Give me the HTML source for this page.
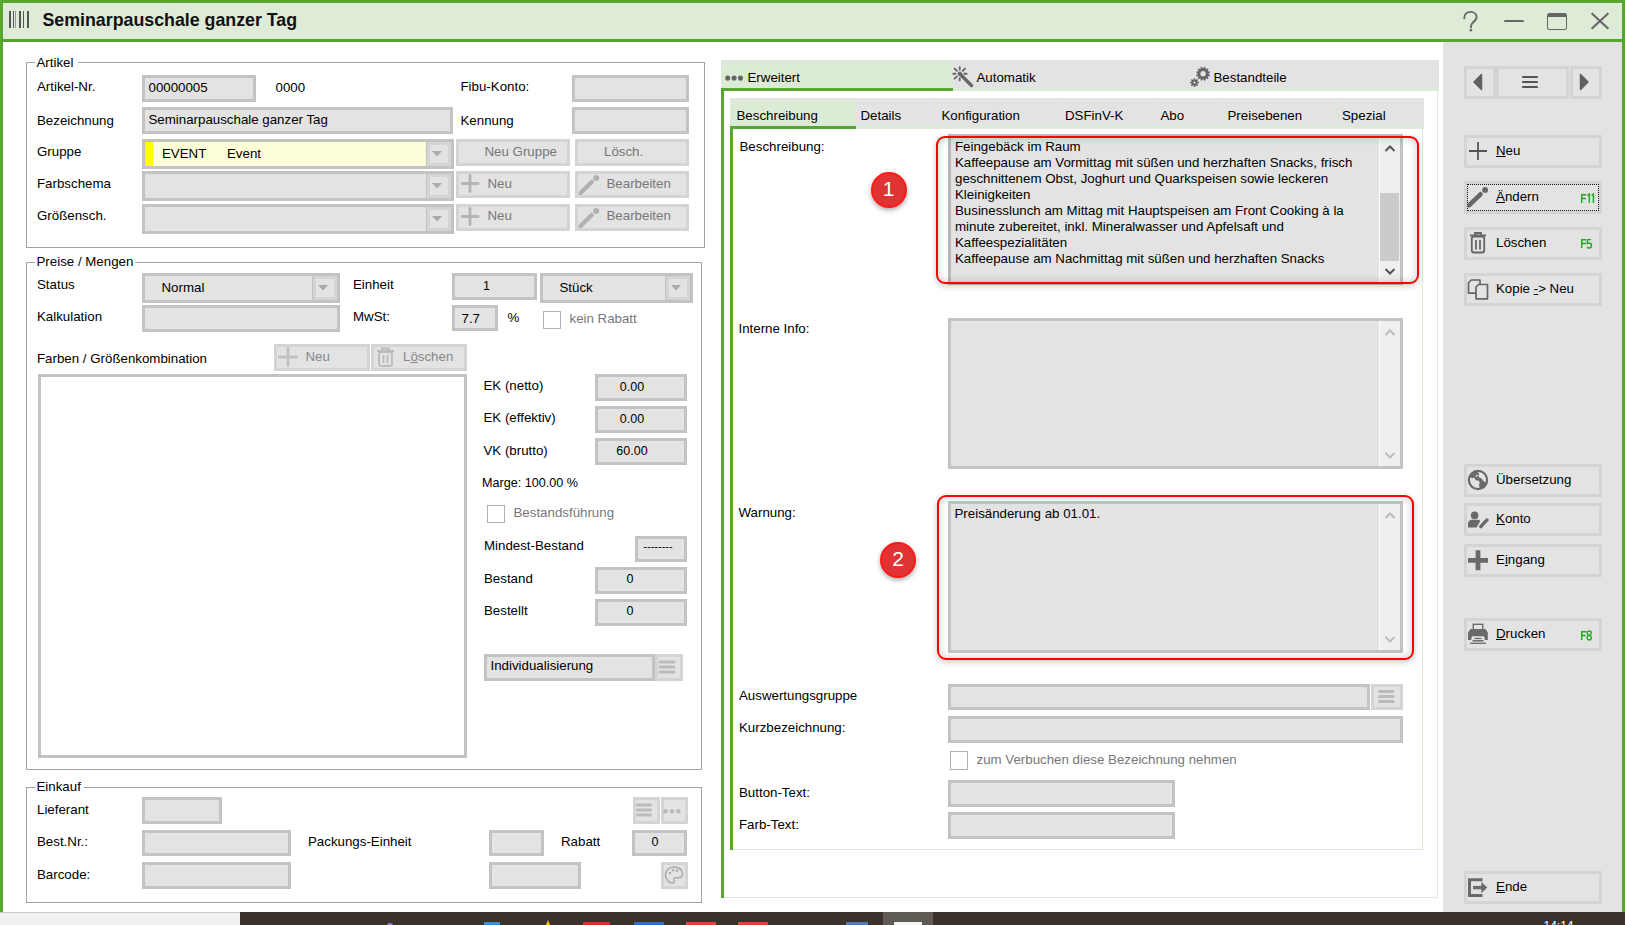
<!DOCTYPE html><html><head><meta charset="utf-8"><style>
html,body{margin:0;padding:0;width:1625px;height:925px;overflow:hidden;background:#fff}
.a{position:absolute;box-sizing:border-box}
.t{font-family:"Liberation Sans",sans-serif;white-space:nowrap;line-height:15px}
svg{overflow:visible}
</style></head><body>
<div class="a" style="left:0px;top:0px;width:1625px;height:912px;background:#fff;"></div>
<div class="a" style="left:0px;top:0px;width:1625px;height:3px;background:#58a531;"></div>
<div class="a" style="left:0px;top:0px;width:3px;height:912px;background:#58a531;"></div>
<div class="a" style="left:1622px;top:0px;width:3px;height:912px;background:#58a531;"></div>
<div class="a" style="left:3px;top:3px;width:1619px;height:36px;background:#deebd6;"></div>
<div class="a" style="left:3px;top:39px;width:1619px;height:3px;background:#58a531;"></div>
<div class="a" style="left:9px;top:11px;width:2px;height:17px;background:#555;"></div>
<div class="a" style="left:13px;top:11px;width:1px;height:17px;background:#555;"></div>
<div class="a" style="left:15px;top:11px;width:1px;height:17px;background:#999;"></div>
<div class="a" style="left:19px;top:11px;width:2px;height:17px;background:#555;"></div>
<div class="a" style="left:23px;top:11px;width:1px;height:17px;background:#555;"></div>
<div class="a" style="left:27px;top:11px;width:2px;height:17px;background:#555;"></div>
<div class="a t " style="left:42.5px;top:12.78px;font-size:17.8px;color:#111;font-weight:bold;">Seminarpauschale ganzer Tag</div>
<svg class="a" style="left:1460px;top:8px" width="24" height="26" viewBox="0 0 24 26"><path d="M4.3 10.2 C4.1 6.3 6.6 3.9 10.5 3.9 C14.4 3.9 16.6 6.3 16.6 9.1 C16.6 11.9 14.6 13.3 12.7 14.8 C11.2 16 10.9 17 10.9 19.4" stroke="#666" stroke-width="1.9" fill="none" stroke-linecap="round"/><circle cx="10.9" cy="22.2" r="1.3" fill="#666"/></svg>
<div class="a" style="left:1504px;top:20px;width:20px;height:2px;background:#666;border-radius:1px;"></div>
<div class="a" style="left:1547px;top:12.5px;width:20px;height:17.0px;border:1.6px solid #666;border-top-width:4.2px;border-radius:2.5px;"></div>
<svg class="a" style="left:1590px;top:12px" width="20" height="20" viewBox="0 0 20 20"><path d="M2.2 1.7 L17.8 16.3 M17.8 1.7 L2.2 16.3" stroke="#666" stroke-width="2.1" stroke-linecap="round"/></svg>
<div class="a" style="left:26px;top:62px;width:679px;height:186px;border:1px solid #a3a3a3;"></div>
<div class="a" style="left:35px;top:60px;width:43px;height:5px;background:#fff;"></div>
<div class="a t " style="left:36.5px;top:54.61px;font-size:13.3px;color:#000;font-weight:normal;">Artikel</div>
<div class="a t " style="left:37.0px;top:79.11px;font-size:13.3px;color:#000;font-weight:normal;">Artikel-Nr.</div>
<div class="a" style="left:142px;top:75px;width:114px;height:27px;background:#e3e3e3;border:3px solid #c3c3c3;"></div>
<div class="a t " style="left:148.5px;top:80.11px;font-size:13.3px;color:#000;font-weight:normal;">00000005</div>
<div class="a t " style="left:275.5px;top:79.61px;font-size:13.3px;color:#000;font-weight:normal;">0000</div>
<div class="a t " style="left:460.5px;top:79.11px;font-size:13.3px;color:#000;font-weight:normal;">Fibu-Konto:</div>
<div class="a" style="left:572px;top:75px;width:117px;height:27px;background:#e3e3e3;border:3px solid #c3c3c3;"></div>
<div class="a t " style="left:37.0px;top:113.11px;font-size:13.3px;color:#000;font-weight:normal;">Bezeichnung</div>
<div class="a" style="left:142px;top:107px;width:311px;height:27px;background:#e3e3e3;border:3px solid #c3c3c3;"></div>
<div class="a t " style="left:148.5px;top:112.11px;font-size:13.3px;color:#000;font-weight:normal;">Seminarpauschale ganzer Tag</div>
<div class="a t " style="left:460.5px;top:112.61px;font-size:13.3px;color:#000;font-weight:normal;">Kennung</div>
<div class="a" style="left:572px;top:107px;width:117px;height:27px;background:#e3e3e3;border:3px solid #c3c3c3;"></div>
<div class="a t " style="left:37.0px;top:144.11px;font-size:13.3px;color:#000;font-weight:normal;">Gruppe</div>
<div class="a" style="left:142px;top:139px;width:312px;height:30px;background:#fdfdd8;border:3px solid #c3c3c3;"></div>
<div class="a" style="left:426px;top:142px;width:1px;height:24px;background:#c3c3c3;"></div>
<div class="a" style="left:427px;top:142px;width:24px;height:24px;background:#e3e3e3;border:3px solid #d4d4d4;"></div>
<svg class="a" style="left:427px;top:142px" width="25" height="24"><polygon points="5,9.0 15,9.0 10,14.5" fill="#aaa"/></svg>
<div class="a" style="left:145px;top:142px;width:8px;height:24px;background:#ffff00;"></div>
<div class="a t " style="left:162.0px;top:145.61px;font-size:13.3px;color:#000;font-weight:normal;">EVENT</div>
<div class="a t " style="left:227.0px;top:145.61px;font-size:13.3px;color:#000;font-weight:normal;">Event</div>
<div class="a" style="left:456px;top:139px;width:114px;height:27px;background:#e3e3e3;border:3px solid #d4d4d4;"></div>
<div class="a t " style="left:484.5px;top:144.11px;font-size:13.3px;color:#777;font-weight:normal;">Neu Gruppe</div>
<div class="a" style="left:575px;top:139px;width:114px;height:27px;background:#e3e3e3;border:3px solid #d4d4d4;"></div>
<div class="a t " style="left:604.0px;top:144.11px;font-size:13.3px;color:#777;font-weight:normal;">Lösch.</div>
<div class="a t " style="left:37.0px;top:175.61px;font-size:13.3px;color:#000;font-weight:normal;">Farbschema</div>
<div class="a" style="left:142px;top:171px;width:312px;height:30px;background:#e3e3e3;border:3px solid #c3c3c3;"></div>
<div class="a" style="left:426px;top:174px;width:1px;height:24px;background:#c3c3c3;"></div>
<div class="a" style="left:427px;top:174px;width:24px;height:24px;background:#e3e3e3;border:3px solid #d4d4d4;"></div>
<svg class="a" style="left:427px;top:174px" width="25" height="24"><polygon points="5,9.0 15,9.0 10,14.5" fill="#aaa"/></svg>
<div class="a" style="left:456px;top:171px;width:114px;height:27px;background:#e3e3e3;border:3px solid #d4d4d4;"></div>
<div class="a t " style="left:487.5px;top:175.61px;font-size:13.3px;color:#777;font-weight:normal;">Neu</div>
<div class="a" style="left:575px;top:171px;width:114px;height:27px;background:#e3e3e3;border:3px solid #d4d4d4;"></div>
<div class="a t " style="left:606.5px;top:175.61px;font-size:13.3px;color:#777;font-weight:normal;">Bearbeiten</div>
<div class="a t " style="left:37.0px;top:207.61px;font-size:13.3px;color:#000;font-weight:normal;">Größensch.</div>
<div class="a" style="left:142px;top:204px;width:312px;height:30px;background:#e3e3e3;border:3px solid #c3c3c3;"></div>
<div class="a" style="left:426px;top:207px;width:1px;height:24px;background:#c3c3c3;"></div>
<div class="a" style="left:427px;top:207px;width:24px;height:24px;background:#e3e3e3;border:3px solid #d4d4d4;"></div>
<svg class="a" style="left:427px;top:207px" width="25" height="24"><polygon points="5,9.0 15,9.0 10,14.5" fill="#aaa"/></svg>
<div class="a" style="left:456px;top:204px;width:114px;height:27px;background:#e3e3e3;border:3px solid #d4d4d4;"></div>
<div class="a t " style="left:487.5px;top:208.11px;font-size:13.3px;color:#777;font-weight:normal;">Neu</div>
<div class="a" style="left:575px;top:204px;width:114px;height:27px;background:#e3e3e3;border:3px solid #d4d4d4;"></div>
<div class="a t " style="left:606.5px;top:208.11px;font-size:13.3px;color:#777;font-weight:normal;">Bearbeiten</div>
<svg class="a" style="left:461px;top:174px" width="19" height="19" viewBox="0 0 19 19"><path d="M9 1.5 V17.5 M1.2 9.5 H17.2" stroke="#b5b5b5" stroke-width="2.8" stroke-linecap="round"/></svg>
<svg class="a" style="left:578px;top:174px" width="22" height="22" viewBox="0 0 22 22"><path d="M2.5 19 L13.8 8" stroke="#b0b0b0" stroke-width="4.4" stroke-linecap="round"/><circle cx="18.2" cy="3.9" r="3" fill="#b0b0b0"/></svg>
<svg class="a" style="left:461px;top:207px" width="19" height="19" viewBox="0 0 19 19"><path d="M9 1.5 V17.5 M1.2 9.5 H17.2" stroke="#b5b5b5" stroke-width="2.8" stroke-linecap="round"/></svg>
<svg class="a" style="left:578px;top:207px" width="22" height="22" viewBox="0 0 22 22"><path d="M2.5 19 L13.8 8" stroke="#b0b0b0" stroke-width="4.4" stroke-linecap="round"/><circle cx="18.2" cy="3.9" r="3" fill="#b0b0b0"/></svg>
<div class="a" style="left:26px;top:262px;width:676px;height:508px;border:1px solid #a3a3a3;"></div>
<div class="a" style="left:35px;top:260px;width:100px;height:5px;background:#fff;"></div>
<div class="a t " style="left:36.5px;top:254.11px;font-size:13.3px;color:#000;font-weight:normal;">Preise / Mengen</div>
<div class="a t " style="left:37.0px;top:277.11px;font-size:13.3px;color:#000;font-weight:normal;">Status</div>
<div class="a" style="left:142px;top:273px;width:198px;height:30px;background:#e3e3e3;border:3px solid #c3c3c3;"></div>
<div class="a" style="left:312px;top:276px;width:1px;height:24px;background:#c3c3c3;"></div>
<div class="a" style="left:313px;top:276px;width:24px;height:24px;background:#e3e3e3;border:3px solid #d4d4d4;"></div>
<svg class="a" style="left:313px;top:276px" width="25" height="24"><polygon points="5,9.0 15,9.0 10,14.5" fill="#aaa"/></svg>
<div class="a t " style="left:161.5px;top:280.11px;font-size:13.3px;color:#000;font-weight:normal;">Normal</div>
<div class="a t " style="left:37.0px;top:308.61px;font-size:13.3px;color:#000;font-weight:normal;">Kalkulation</div>
<div class="a" style="left:142px;top:305px;width:198px;height:27px;background:#e3e3e3;border:3px solid #c3c3c3;"></div>
<div class="a t " style="left:353.0px;top:277.11px;font-size:13.3px;color:#000;font-weight:normal;">Einheit</div>
<div class="a" style="left:452px;top:273px;width:85px;height:27px;background:#e3e3e3;border:3px solid #c3c3c3;"></div>
<div class="a t " style="left:483.0px;top:278.82px;font-size:12.5px;color:#000;font-weight:normal;">1</div>
<div class="a" style="left:540px;top:273px;width:153px;height:30px;background:#e3e3e3;border:3px solid #c3c3c3;"></div>
<div class="a" style="left:665px;top:276px;width:1px;height:24px;background:#c3c3c3;"></div>
<div class="a" style="left:666px;top:276px;width:24px;height:24px;background:#e3e3e3;border:3px solid #d4d4d4;"></div>
<svg class="a" style="left:666px;top:276px" width="25" height="24"><polygon points="5,9.0 15,9.0 10,14.5" fill="#aaa"/></svg>
<div class="a t " style="left:559.5px;top:279.61px;font-size:13.3px;color:#000;font-weight:normal;">Stück</div>
<div class="a t " style="left:353.0px;top:309.11px;font-size:13.3px;color:#000;font-weight:normal;">MwSt:</div>
<div class="a" style="left:452px;top:305px;width:46px;height:26px;background:#e3e3e3;border:3px solid #c3c3c3;"></div>
<div class="a t " style="left:461.5px;top:311.11px;font-size:13.3px;color:#000;font-weight:normal;">7.7</div>
<div class="a t " style="left:507.5px;top:310.11px;font-size:13.3px;color:#000;font-weight:normal;">%</div>
<div class="a" style="left:543px;top:311px;width:18px;height:18px;background:#fff;border:1.5px solid #b0b0b0;"></div>
<div class="a t " style="left:569.5px;top:310.61px;font-size:13.3px;color:#777;font-weight:normal;">kein Rabatt</div>
<div class="a t " style="left:37.0px;top:351.11px;font-size:13.3px;color:#000;font-weight:normal;">Farben / Größenkombination</div>
<div class="a" style="left:274px;top:344px;width:96px;height:27px;background:#e3e3e3;border:3px solid #d4d4d4;"></div>
<div class="a t " style="left:305.5px;top:349.11px;font-size:13.3px;color:#888;font-weight:normal;">Neu</div>
<svg class="a" style="left:278px;top:347px" width="20" height="20" viewBox="0 0 20 20"><path d="M10 1.5 V18.5 M1.5 10 H18.5" stroke="#c0c0c0" stroke-width="2.8" stroke-linecap="round"/></svg>
<div class="a" style="left:371px;top:344px;width:96px;height:27px;background:#e3e3e3;border:3px solid #d4d4d4;"></div>
<div class="a t " style="left:403.0px;top:349.11px;font-size:13.3px;color:#888;font-weight:normal;">L<u>ö</u>schen</div>
<svg class="a" style="left:376px;top:347px" width="19" height="20" viewBox="0 0 19 20"><path d="M1 4 H18 M6 4 V1.5 H13 V4" stroke="#bbb" stroke-width="1.8" fill="none"/><rect x="3" y="5" width="13" height="14" rx="2" stroke="#bbb" stroke-width="1.8" fill="none"/><path d="M7.5 8 V16 M11.5 8 V16" stroke="#bbb" stroke-width="1.8"/></svg>
<div class="a" style="left:38px;top:374px;width:429px;height:384px;background:#fff;border:3px solid #c3c3c3;"></div>
<div class="a t " style="left:483.5px;top:378.11px;font-size:13.3px;color:#000;font-weight:normal;">EK (netto)</div>
<div class="a" style="left:595px;top:374px;width:92px;height:27px;background:#e3e3e3;border:3px solid #c3c3c3;"></div>
<div class="a t" style="left:595px;width:74px;text-align:center;top:379.82px;font-size:12.5px;color:#000;">0.00</div>
<div class="a t " style="left:483.5px;top:410.11px;font-size:13.3px;color:#000;font-weight:normal;">EK (effektiv)</div>
<div class="a" style="left:595px;top:406px;width:92px;height:27px;background:#e3e3e3;border:3px solid #c3c3c3;"></div>
<div class="a t" style="left:595px;width:74px;text-align:center;top:411.82px;font-size:12.5px;color:#000;">0.00</div>
<div class="a t " style="left:483.5px;top:442.61px;font-size:13.3px;color:#000;font-weight:normal;">VK (brutto)</div>
<div class="a" style="left:595px;top:438px;width:92px;height:27px;background:#e3e3e3;border:3px solid #c3c3c3;"></div>
<div class="a t" style="left:595px;width:74px;text-align:center;top:443.82px;font-size:12.5px;color:#000;">60.00</div>
<div class="a t " style="left:482.0px;top:476.16px;font-size:12.6px;color:#000;font-weight:normal;">Marge: 100.00 %</div>
<div class="a" style="left:487px;top:505px;width:18px;height:18px;background:#fff;border:1.5px solid #b0b0b0;"></div>
<div class="a t " style="left:513.5px;top:505.11px;font-size:13.3px;color:#777;font-weight:normal;">Bestandsführung</div>
<div class="a t " style="left:484.0px;top:538.11px;font-size:13.3px;color:#000;font-weight:normal;">Mindest-Bestand</div>
<div class="a" style="left:635px;top:536px;width:52px;height:26px;background:#e3e3e3;border:3px solid #c3c3c3;"></div>
<div class="a t" style="left:635px;width:46px;text-align:center;top:539.26px;font-size:11px;color:#000;">--------</div>
<div class="a t " style="left:484.0px;top:571.11px;font-size:13.3px;color:#000;font-weight:normal;">Bestand</div>
<div class="a" style="left:595px;top:567px;width:92px;height:27px;background:#e3e3e3;border:3px solid #c3c3c3;"></div>
<div class="a t" style="left:595px;width:70px;text-align:center;top:571.82px;font-size:12.5px;color:#000;">0</div>
<div class="a t " style="left:484.0px;top:603.11px;font-size:13.3px;color:#000;font-weight:normal;">Bestellt</div>
<div class="a" style="left:595px;top:599px;width:92px;height:27px;background:#e3e3e3;border:3px solid #c3c3c3;"></div>
<div class="a t" style="left:595px;width:70px;text-align:center;top:603.82px;font-size:12.5px;color:#000;">0</div>
<div class="a" style="left:484px;top:654px;width:171px;height:27px;background:#e3e3e3;border:3px solid #c3c3c3;"></div>
<div class="a t " style="left:490.5px;top:658.11px;font-size:13.3px;color:#000;font-weight:normal;">Individualisierung</div>
<div class="a" style="left:655px;top:654px;width:28px;height:27px;background:#e3e3e3;border:3px solid #d4d4d4;"></div>
<svg class="a" style="left:655px;top:654px" width="27" height="27" viewBox="0 0 27 27"><path d="M5 8 H19 M5 13 H19 M5 18 H19" stroke="#bbb" stroke-width="3" stroke-linecap="round"/></svg>
<div class="a" style="left:26px;top:787px;width:676px;height:116px;border:1px solid #a3a3a3;"></div>
<div class="a" style="left:35px;top:785px;width:49px;height:5px;background:#fff;"></div>
<div class="a t " style="left:36.5px;top:779.11px;font-size:13.3px;color:#000;font-weight:normal;">Einkauf</div>
<div class="a t " style="left:37.0px;top:801.61px;font-size:13.3px;color:#000;font-weight:normal;">Lieferant</div>
<div class="a" style="left:142px;top:797px;width:80px;height:27px;background:#e3e3e3;border:3px solid #c3c3c3;"></div>
<div class="a" style="left:633px;top:797px;width:27px;height:27px;background:#e3e3e3;border:3px solid #d4d4d4;"></div>
<div class="a" style="left:661px;top:797px;width:27px;height:27px;background:#e3e3e3;border:3px solid #d4d4d4;"></div>
<svg class="a" style="left:633px;top:797px" width="26" height="26" viewBox="0 0 26 26"><path d="M4.5 8 H17.5 M4.5 13 H17.5 M4.5 18 H17.5" stroke="#bbb" stroke-width="3" stroke-linecap="round"/></svg>
<svg class="a" style="left:661px;top:797px" width="26" height="26" viewBox="0 0 26 26"><circle cx="4.4" cy="14.2" r="2.3" fill="#bbb"/><circle cx="11" cy="14.2" r="2.3" fill="#bbb"/><circle cx="17.3" cy="14.2" r="2.3" fill="#bbb"/></svg>
<div class="a t " style="left:37.0px;top:833.61px;font-size:13.3px;color:#000;font-weight:normal;">Best.Nr.:</div>
<div class="a" style="left:142px;top:830px;width:149px;height:26px;background:#e3e3e3;border:3px solid #c3c3c3;"></div>
<div class="a t " style="left:308.0px;top:833.61px;font-size:13.3px;color:#000;font-weight:normal;">Packungs-Einheit</div>
<div class="a" style="left:489px;top:830px;width:55px;height:26px;background:#e3e3e3;border:3px solid #c3c3c3;"></div>
<div class="a t " style="left:561.0px;top:833.61px;font-size:13.3px;color:#000;font-weight:normal;">Rabatt</div>
<div class="a" style="left:632px;top:830px;width:55px;height:26px;background:#e3e3e3;border:3px solid #c3c3c3;"></div>
<div class="a t" style="left:632px;width:46px;text-align:center;top:834.82px;font-size:12.5px;color:#000;">0</div>
<div class="a t " style="left:37.0px;top:867.11px;font-size:13.3px;color:#000;font-weight:normal;">Barcode:</div>
<div class="a" style="left:142px;top:862px;width:149px;height:27px;background:#e3e3e3;border:3px solid #c3c3c3;"></div>
<div class="a" style="left:489px;top:862px;width:92px;height:27px;background:#e3e3e3;border:3px solid #c3c3c3;"></div>
<div class="a" style="left:661px;top:862px;width:27px;height:27px;background:#e3e3e3;border:3px solid #d4d4d4;"></div>
<svg class="a" style="left:663px;top:864px" width="22" height="22" viewBox="0 0 22 22"><path d="M11 3 C5.5 3 2.5 7 2.5 11 C2.5 15.5 6 19 10 19 C11.5 19 11.5 17.5 11 16.5 C10.3 15 11 13.8 12.8 13.8 H15 C17.8 13.8 19.5 12 19.5 9.5 C19.5 5.5 15.8 3 11 3 Z" stroke="#aaa" stroke-width="1.6" fill="none"/><circle cx="7" cy="9" r="1.3" fill="#aaa"/><circle cx="10" cy="6.3" r="1.3" fill="#aaa"/><circle cx="14" cy="6.5" r="1.3" fill="#aaa"/></svg>
<div class="a" style="left:721px;top:60px;width:718px;height:31px;background:#e3e3e3;"></div>
<div class="a" style="left:721px;top:88px;width:717px;height:3px;background:#dcebd5;"></div>
<div class="a" style="left:721px;top:62px;width:232px;height:26px;background:#dcebd5;"></div>
<div class="a" style="left:721px;top:88px;width:232px;height:3px;background:#58a531;"></div>
<div class="a" style="left:1186px;top:62px;width:1px;height:26px;background:#dcebd5;"></div>
<svg class="a" style="left:722px;top:73px" width="22" height="10" viewBox="0 0 22 10"><circle cx="5.7" cy="5.1" r="2.55" fill="#666"/><circle cx="12.1" cy="5.1" r="2.55" fill="#666"/><circle cx="18.5" cy="5.1" r="2.55" fill="#666"/></svg>
<div class="a t " style="left:747.5px;top:69.91px;font-size:13.3px;color:#000;font-weight:normal;">Erweitert</div>
<svg class="a" style="left:952px;top:66px" width="22" height="22" viewBox="0 0 22 22"><path d="M8.2 8.2 L19.5 19.5" stroke="#666" stroke-width="3.4" stroke-linecap="round"/><circle cx="7.7" cy="7.7" r="1.6" fill="none" stroke="#666" stroke-width="1.2"/><path d="M7.7 1.3 V3.4 M7.7 12.2 V14.4 M1.3 7.7 H3.4 M12.3 7.7 H14.6 M2.6 2.6 L4.9 4.9 M12.9 2.6 L10.7 4.9 M2.6 12.6 L4.9 10.4" stroke="#666" stroke-width="1.9" stroke-linecap="round"/></svg>
<div class="a t " style="left:976.5px;top:70.31px;font-size:13.3px;color:#000;font-weight:normal;">Automatik</div>
<svg class="a" style="left:1188px;top:64px" width="24" height="24" viewBox="0 0 24 24"><circle cx="15.1" cy="9.8" r="5.7" fill="#666"/><path d="M19.93 11.09 L21.86 11.61 M18.64 13.34 L20.05 14.75 M16.39 14.63 L16.91 16.56 M13.81 14.63 L13.29 16.56 M11.56 13.34 L10.15 14.75 M10.27 11.09 L8.34 11.61 M10.27 8.51 L8.34 7.99 M11.56 6.26 L10.15 4.85 M13.81 4.97 L13.29 3.04 M16.39 4.97 L16.91 3.04 M18.64 6.26 L20.05 4.85 M19.93 8.51 L21.86 7.99 " stroke="#666" stroke-width="1.7"/><circle cx="15.1" cy="9.8" r="2.7" fill="#e3e3e3"/><circle cx="6.5" cy="18.6" r="3.2" fill="#666"/><path d="M9.00 18.60 L10.90 18.60 M8.27 20.37 L9.61 21.71 M6.50 21.10 L6.50 23.00 M4.73 20.37 L3.39 21.71 M4.00 18.60 L2.10 18.60 M4.73 16.83 L3.39 15.49 M6.50 16.10 L6.50 14.20 M8.27 16.83 L9.61 15.49 " stroke="#666" stroke-width="1.5"/><circle cx="6.5" cy="18.6" r="1.1" fill="#e3e3e3"/></svg>
<div class="a t " style="left:1213.5px;top:70.31px;font-size:13.3px;color:#000;font-weight:normal;">Bestandteile</div>
<div class="a" style="left:721px;top:88px;width:3px;height:810px;background:#58a531;"></div>
<div class="a" style="left:724px;top:897px;width:714px;height:1px;background:#dcebd5;"></div>
<div class="a" style="left:1437px;top:91px;width:1px;height:807px;background:#dcebd5;"></div>
<div class="a" style="left:730px;top:98px;width:694px;height:31px;background:#e3e3e3;"></div>
<div class="a" style="left:730px;top:126px;width:693px;height:3px;background:#dcebd5;"></div>
<div class="a" style="left:730px;top:100px;width:126px;height:26px;background:#dcebd5;"></div>
<div class="a" style="left:730px;top:126px;width:126px;height:3px;background:#58a531;"></div>
<div class="a" style="left:935px;top:100px;width:1px;height:26px;background:#dcebd5;"></div>
<div class="a" style="left:1059px;top:100px;width:1px;height:26px;background:#dcebd5;"></div>
<div class="a" style="left:1155px;top:100px;width:1px;height:26px;background:#dcebd5;"></div>
<div class="a" style="left:1220px;top:100px;width:1px;height:26px;background:#dcebd5;"></div>
<div class="a" style="left:1336px;top:100px;width:1px;height:26px;background:#dcebd5;"></div>
<div class="a t " style="left:736.5px;top:108.11px;font-size:13.3px;color:#000;font-weight:normal;">Beschreibung</div>
<div class="a t " style="left:860.5px;top:108.11px;font-size:13.3px;color:#000;font-weight:normal;">Details</div>
<div class="a t " style="left:941.5px;top:108.11px;font-size:13.3px;color:#000;font-weight:normal;">Konfiguration</div>
<div class="a t " style="left:1065.0px;top:108.11px;font-size:13.3px;color:#000;font-weight:normal;">DSFinV-K</div>
<div class="a t " style="left:1160.5px;top:108.11px;font-size:13.3px;color:#000;font-weight:normal;">Abo</div>
<div class="a t " style="left:1227.5px;top:108.11px;font-size:13.3px;color:#000;font-weight:normal;">Preisebenen</div>
<div class="a t " style="left:1342.0px;top:108.11px;font-size:13.3px;color:#000;font-weight:normal;">Spezial</div>
<div class="a" style="left:730px;top:129px;width:3px;height:721px;background:#58a531;"></div>
<div class="a" style="left:733px;top:849px;width:690px;height:1px;background:#dcebd5;"></div>
<div class="a" style="left:1422px;top:129px;width:1px;height:721px;background:#dcebd5;"></div>
<div class="a t " style="left:739.5px;top:139.11px;font-size:13.3px;color:#000;font-weight:normal;">Beschreibung:</div>
<div class="a" style="left:948px;top:134px;width:455px;height:151px;background:#e3e3e3;border:3px solid #c3c3c3;"></div>
<div class="a" style="left:1379px;top:137px;width:21px;height:145px;background:#efefef;"></div>
<div class="a" style="left:1379px;top:137px;width:1px;height:145px;background:#fff;"></div>
<div class="a" style="left:1380px;top:193px;width:19px;height:68px;background:#cbcbcb;"></div>
<svg class="a" style="left:1384px;top:144px" width="12" height="9" viewBox="0 0 12 9"><path d="M1.5 7 L6 2.5 L10.5 7" stroke="#555" stroke-width="2" fill="none"/></svg>
<svg class="a" style="left:1384px;top:267px" width="12" height="9" viewBox="0 0 12 9"><path d="M1.5 2 L6 6.5 L10.5 2" stroke="#555" stroke-width="2" fill="none"/></svg>
<div class="a" style="left:948px;top:134px;width:3px;height:151px;background:#b8b8b8;"></div>
<div class="a t " style="left:955.0px;top:139.11px;font-size:13.3px;color:#000;font-weight:normal;">Feingebäck im Raum</div>
<div class="a t " style="left:955.0px;top:155.11px;font-size:13.3px;color:#000;font-weight:normal;">Kaffeepause am Vormittag mit süßen und herzhaften Snacks, frisch</div>
<div class="a t " style="left:955.0px;top:171.11px;font-size:13.3px;color:#000;font-weight:normal;">geschnittenem Obst, Joghurt und Quarkspeisen sowie leckeren</div>
<div class="a t " style="left:955.0px;top:187.11px;font-size:13.3px;color:#000;font-weight:normal;">Kleinigkeiten</div>
<div class="a t " style="left:955.0px;top:203.11px;font-size:13.3px;color:#000;font-weight:normal;">Businesslunch am Mittag mit Hauptspeisen am Front Cooking à la</div>
<div class="a t " style="left:955.0px;top:219.11px;font-size:13.3px;color:#000;font-weight:normal;">minute zubereitet, inkl. Mineralwasser und Apfelsaft und</div>
<div class="a t " style="left:955.0px;top:235.11px;font-size:13.3px;color:#000;font-weight:normal;">Kaffeespezialitäten</div>
<div class="a t " style="left:955.0px;top:251.11px;font-size:13.3px;color:#000;font-weight:normal;">Kaffeepause am Nachmittag mit süßen und herzhaften Snacks</div>
<div class="a" style="left:936px;top:136px;width:483px;height:148px;border:2.6px solid #ff0000;border-radius:9px;box-shadow:0 2px 6px rgba(0,0,0,0.22), inset 0 0 8px rgba(0,0,0,0.2);"></div>
<div class="a" style="left:870.5px;top:171.5px;width:36px;height:36px;border-radius:50%;background:#e03333;border:2px solid #ff1a1a;box-shadow:0 2px 5px rgba(0,0,0,0.35);"></div>
<div class="a t" style="left:870.5px;top:178.0px;width:36px;text-align:center;font-size:21px;line-height:21px;color:#fff;">1</div>
<div class="a t " style="left:738.5px;top:321.11px;font-size:13.3px;color:#000;font-weight:normal;">Interne Info:</div>
<div class="a" style="left:948px;top:318px;width:455px;height:151px;background:#e3e3e3;border:3px solid #c3c3c3;"></div>
<div class="a" style="left:1379px;top:321px;width:21px;height:145px;background:#efefef;"></div>
<div class="a" style="left:1379px;top:321px;width:1px;height:145px;background:#fff;"></div>
<svg class="a" style="left:1384px;top:328px" width="12" height="9" viewBox="0 0 12 9"><path d="M1.5 7 L6 2.5 L10.5 7" stroke="#bbb" stroke-width="2" fill="none"/></svg>
<svg class="a" style="left:1384px;top:451px" width="12" height="9" viewBox="0 0 12 9"><path d="M1.5 2 L6 6.5 L10.5 2" stroke="#bbb" stroke-width="2" fill="none"/></svg>
<div class="a t " style="left:738.5px;top:505.11px;font-size:13.3px;color:#000;font-weight:normal;">Warnung:</div>
<div class="a" style="left:948px;top:501px;width:455px;height:152px;background:#e3e3e3;border:3px solid #c3c3c3;"></div>
<div class="a" style="left:1379px;top:504px;width:21px;height:146px;background:#efefef;"></div>
<div class="a" style="left:1379px;top:504px;width:1px;height:146px;background:#fff;"></div>
<svg class="a" style="left:1384px;top:511px" width="12" height="9" viewBox="0 0 12 9"><path d="M1.5 7 L6 2.5 L10.5 7" stroke="#bbb" stroke-width="2" fill="none"/></svg>
<svg class="a" style="left:1384px;top:635px" width="12" height="9" viewBox="0 0 12 9"><path d="M1.5 2 L6 6.5 L10.5 2" stroke="#bbb" stroke-width="2" fill="none"/></svg>
<div class="a t " style="left:954.5px;top:506.11px;font-size:13.3px;color:#000;font-weight:normal;">Preisänderung ab 01.01.</div>
<div class="a" style="left:937px;top:495px;width:477px;height:165px;border:2.6px solid #ff0000;border-radius:9px;box-shadow:0 2px 6px rgba(0,0,0,0.22), inset 0 0 8px rgba(0,0,0,0.2);"></div>
<div class="a" style="left:880px;top:541.5px;width:36px;height:36px;border-radius:50%;background:#e03333;border:2px solid #ff1a1a;box-shadow:0 2px 5px rgba(0,0,0,0.35);"></div>
<div class="a t" style="left:880px;top:548.0px;width:36px;text-align:center;font-size:21px;line-height:21px;color:#fff;">2</div>
<div class="a t " style="left:739.0px;top:687.61px;font-size:13.3px;color:#000;font-weight:normal;">Auswertungsgruppe</div>
<div class="a" style="left:948px;top:684px;width:422px;height:26px;background:#e3e3e3;border:3px solid #c3c3c3;"></div>
<div class="a" style="left:1371px;top:684px;width:32px;height:26px;background:#e3e3e3;border:3px solid #d4d4d4;"></div>
<svg class="a" style="left:1371px;top:684px" width="32" height="26" viewBox="0 0 32 26"><path d="M8.5 7.5 H22 M8.5 12.5 H22 M8.5 17.5 H22" stroke="#bbb" stroke-width="3" stroke-linecap="round"/></svg>
<div class="a t " style="left:739.0px;top:720.11px;font-size:13.3px;color:#000;font-weight:normal;">Kurzbezeichnung:</div>
<div class="a" style="left:948px;top:716px;width:455px;height:27px;background:#e3e3e3;border:3px solid #c3c3c3;"></div>
<div class="a" style="left:950px;top:751px;width:18px;height:19px;background:#fff;border:1.5px solid #b0b0b0;"></div>
<div class="a t " style="left:976.5px;top:752.11px;font-size:13.3px;color:#777;font-weight:normal;">zum Verbuchen diese Bezeichnung nehmen</div>
<div class="a t " style="left:739.0px;top:785.41px;font-size:13.3px;color:#000;font-weight:normal;">Button-Text:</div>
<div class="a" style="left:948px;top:780px;width:227px;height:27px;background:#e3e3e3;border:3px solid #c3c3c3;"></div>
<div class="a t " style="left:739.0px;top:817.41px;font-size:13.3px;color:#000;font-weight:normal;">Farb-Text:</div>
<div class="a" style="left:948px;top:812px;width:227px;height:27px;background:#e3e3e3;border:3px solid #c3c3c3;"></div>
<div class="a" style="left:1443px;top:42px;width:179px;height:870px;background:#e3e3e3;"></div>
<div class="a" style="left:1464px;top:66px;width:105px;height:33px;background:#e3e3e3;border:3px solid #d4d4d4;"></div>
<div class="a" style="left:1493px;top:69px;width:6px;height:27px;background:#d4d4d4;"></div>
<div class="a" style="left:1570px;top:66px;width:32px;height:33px;background:#e3e3e3;border:3px solid #d4d4d4;"></div>
<svg class="a" style="left:1472px;top:73px" width="11" height="18" viewBox="0 0 11 18"><path d="M9.5 1.5 L2 9 L9.5 16.5 Z" fill="#606060" stroke="#606060" stroke-width="1.5" stroke-linejoin="round"/></svg>
<svg class="a" style="left:1579px;top:73px" width="11" height="18" viewBox="0 0 11 18"><path d="M1.5 1.5 L9 9 L1.5 16.5 Z" fill="#606060" stroke="#606060" stroke-width="1.5" stroke-linejoin="round"/></svg>
<svg class="a" style="left:1521px;top:75px" width="18" height="14" viewBox="0 0 18 14"><path d="M2 2 H16 M2 7 H16 M2 12 H16" stroke="#555" stroke-width="2.2" stroke-linecap="round"/></svg>
<div class="a" style="left:1464px;top:135px;width:138px;height:33px;background:#e3e3e3;border:3px solid #d4d4d4;"></div>
<div class="a t " style="left:1496.0px;top:143.11px;font-size:13.3px;color:#000;font-weight:normal;"><u>N</u>eu</div>
<svg class="a" style="left:1468px;top:141px" width="20" height="20" viewBox="0 0 20 20"><path d="M10 1 V19 M1 10 H19" stroke="#555" stroke-width="1.8"/></svg>
<div class="a" style="left:1464px;top:181px;width:138px;height:33px;background:#e3e3e3;border:3px solid #d4d4d4;"></div>
<div class="a" style="left:1467px;top:184px;width:132px;height:27px;border:1px solid #111;border-style:dotted;"></div>
<div class="a t " style="left:1496.0px;top:189.11px;font-size:13.3px;color:#000;font-weight:normal;"><u>Ä</u>ndern</div>
<svg class="a" style="left:1580px;top:193px" width="16" height="12" viewBox="0 0 16 12"><g stroke="#22a822" stroke-width="1.45" fill="none"><path d="M1.7 10 V1.7 H6.3 M1.7 5.5 H5.8"/><path d="M9.3 10 V1 L7.5 2.6 M13.4 10 V1 L11.6 2.6"/></g></svg>
<svg class="a" style="left:1467px;top:186px" width="22" height="22" viewBox="0 0 22 22"><path d="M2.2 19.2 L13.5 8.3" stroke="#666" stroke-width="4.6" stroke-linecap="round"/><circle cx="18.1" cy="3.9" r="2.9" fill="#666"/></svg>
<div class="a" style="left:1464px;top:227px;width:138px;height:33px;background:#e3e3e3;border:3px solid #d4d4d4;"></div>
<div class="a t " style="left:1496.0px;top:235.11px;font-size:13.3px;color:#000;font-weight:normal;">Löschen</div>
<svg class="a" style="left:1580px;top:238.3px" width="16" height="12" viewBox="0 0 16 12"><g stroke="#22a822" stroke-width="1.45" fill="none"><path d="M1.7 10 V1.7 H6.3 M1.7 5.5 H5.8"/><path d="M11 1.6 H7.6 L7.2 5.4 C7.7 5.1 8.3 4.9 8.9 4.9 C10.4 4.9 11.5 5.9 11.5 7.4 C11.5 9 10.4 10 8.8 10 C8.1 10 7.4 9.8 6.8 9.4"/></g></svg>
<svg class="a" style="left:1468px;top:231px" width="20" height="24" viewBox="0 0 20 24"><path d="M2 4.5 H18 M7 4.5 V2 H13 V4.5" stroke="#666" stroke-width="1.8" fill="none"/><rect x="3.8" y="5.5" width="12.4" height="16" rx="2" stroke="#666" stroke-width="1.8" fill="none"/><path d="M8 9 V18.5 M12 9 V18.5" stroke="#666" stroke-width="1.8"/></svg>
<div class="a" style="left:1464px;top:273px;width:138px;height:33px;background:#e3e3e3;border:3px solid #d4d4d4;"></div>
<div class="a t " style="left:1496.0px;top:281.11px;font-size:13.3px;color:#000;font-weight:normal;">Kopie <u>-</u>&gt; Neu</div>
<svg class="a" style="left:1467px;top:278px" width="24" height="24" viewBox="0 0 24 24"><path d="M4.2 2 H13 V15.2 H1.5 V4.8 Z" stroke="#666" stroke-width="1.7" fill="#e3e3e3" stroke-linejoin="round"/><path d="M11.5 6.5 H20.5 V20.8 H9 V9 Z" stroke="#666" stroke-width="1.7" fill="#e3e3e3" stroke-linejoin="round"/></svg>
<div class="a" style="left:1464px;top:464px;width:138px;height:33px;background:#e3e3e3;border:3px solid #d4d4d4;"></div>
<div class="a t " style="left:1496.0px;top:472.11px;font-size:13.3px;color:#000;font-weight:normal;">Übersetzung</div>
<svg class="a" style="left:1467px;top:469px" width="23" height="23" viewBox="0 0 23 23"><circle cx="11" cy="11" r="9.1" stroke="#6a6a6a" stroke-width="2.2" fill="none"/><path d="M8.5 2.5 C6 3.2 4 5 3 7.5 C3.5 9 5 9.5 6 9 C7 8.5 8 9 8 10 C8 11 9.5 11.5 10.5 11.5 C12 11.5 13 12.5 12.5 14 C12 15.5 12 17 12.5 18.5 C12.8 19.5 13.5 20 14 20 C17 19 19 17 20 14.5 C19 13.5 17.5 13 16.5 12 C15.5 11 15 9.5 13.5 9 C12.5 8.7 11.5 8 11.5 7 C11.5 6 12.5 5.5 12 4.5 C11.5 3.5 10 3 8.5 2.5 Z" fill="#6a6a6a"/><path d="M10 5.5 C10.5 6.5 9.5 7.5 8.5 7" stroke="#e3e3e3" stroke-width="1.2" fill="none"/></svg>
<div class="a" style="left:1464px;top:503px;width:138px;height:33px;background:#e3e3e3;border:3px solid #d4d4d4;"></div>
<div class="a t " style="left:1496.0px;top:511.11px;font-size:13.3px;color:#000;font-weight:normal;"><u>K</u>onto</div>
<svg class="a" style="left:1467px;top:509px" width="23" height="22" viewBox="0 0 23 22"><circle cx="7.6" cy="6.4" r="3.8" fill="#6a6a6a"/><path d="M1 18.5 V14.5 C1 12.2 2.8 10.8 5 10.8 H10.5 C12 10.8 12.8 11.3 13.2 12.2 L9.5 18.5 Z" fill="#6a6a6a"/><path d="M13.8 17.6 L18.8 12.2" stroke="#6a6a6a" stroke-width="3.4" stroke-linecap="round"/><circle cx="20" cy="11" r="1.8" fill="#6a6a6a"/></svg>
<div class="a" style="left:1464px;top:544px;width:138px;height:33px;background:#e3e3e3;border:3px solid #d4d4d4;"></div>
<div class="a t " style="left:1496.0px;top:552.11px;font-size:13.3px;color:#000;font-weight:normal;">E<u>i</u>ngang</div>
<svg class="a" style="left:1467px;top:549px" width="22" height="22" viewBox="0 0 22 22"><path d="M11 1.3 V21.3 M1 11.3 H21" stroke="#6a6a6a" stroke-width="4.8"/></svg>
<div class="a" style="left:1464px;top:618px;width:138px;height:33px;background:#e3e3e3;border:3px solid #d4d4d4;"></div>
<div class="a t " style="left:1496.0px;top:626.11px;font-size:13.3px;color:#000;font-weight:normal;"><u>D</u>rucken</div>
<svg class="a" style="left:1580px;top:630px" width="16" height="12" viewBox="0 0 16 12"><g stroke="#22a822" stroke-width="1.45" fill="none"><path d="M1.7 10 V1.7 H6.3 M1.7 5.5 H5.8"/><path d="M9.2 1 C7.9 1 7.2 1.8 7.2 2.9 C7.2 4 7.9 4.7 9.2 5.2 C10.6 5.7 11.4 6.4 11.4 7.6 C11.4 9 10.5 10 9.2 10 C7.9 10 7 9 7 7.6 C7 6.4 7.8 5.7 9.2 5.2 C10.6 4.7 11.3 4 11.3 2.9 C11.3 1.8 10.6 1 9.2 1 Z"/></g></svg>
<svg class="a" style="left:1467px;top:623px" width="22" height="22" viewBox="0 0 22 22"><rect x="6.3" y="1.3" width="9.4" height="6.5" stroke="#6a6a6a" stroke-width="1.4" fill="#e3e3e3"/><path d="M3.5 6 H18.5 L20.8 9.5 V17 H1 V9.5 Z" fill="#6a6a6a"/><path d="M5 13.3 H17 L18.6 20.3 H3.4 Z" fill="#e3e3e3"/><path d="M3 20.3 H19" stroke="#6a6a6a" stroke-width="1.3"/><path d="M7.5 15.5 H14.5" stroke="#6a6a6a" stroke-width="1.2"/><path d="M5.5 17.8 H16.5" stroke="#6a6a6a" stroke-width="1.5"/></svg>
<div class="a" style="left:1464px;top:871px;width:138px;height:33px;background:#e3e3e3;border:3px solid #d4d4d4;"></div>
<div class="a t " style="left:1496.0px;top:879.11px;font-size:13.3px;color:#000;font-weight:normal;"><u>E</u>nde</div>
<svg class="a" style="left:1467px;top:877px" width="22" height="22" viewBox="0 0 22 22"><path d="M15.5 2.7 H2.5 V18.6 H15.5" stroke="#6a6a6a" stroke-width="3" fill="none"/><path d="M6 10.6 H15" stroke="#6a6a6a" stroke-width="3.4"/><path d="M14.3 5 L20.3 10.6 L14.3 16.2 Z" fill="#6a6a6a"/></svg>
<div class="a" style="left:0px;top:912px;width:240px;height:13px;background:#f1f1f1;"></div>
<div class="a" style="left:0px;top:912px;width:240px;height:1px;background:#c8c8c8;"></div>
<div class="a" style="left:240px;top:912px;width:1385px;height:13px;background:#3a332b;"></div>
<div class="a" style="left:883px;top:912px;width:50px;height:13px;background:#5f5a53;"></div>
<div class="a" style="left:484px;top:922px;width:16px;height:3px;background:#3a8fd8;"></div>
<div class="a" style="left:583px;top:922px;width:27px;height:3px;background:#d83030;"></div>
<div class="a" style="left:634px;top:922px;width:30px;height:3px;background:#2d6fd0;"></div>
<div class="a" style="left:686px;top:922px;width:30px;height:3px;background:#e04040;"></div>
<div class="a" style="left:738px;top:922px;width:30px;height:3px;background:#e04040;"></div>
<div class="a" style="left:846px;top:922px;width:22px;height:3px;background:#5577bb;"></div>
<div class="a" style="left:894px;top:922px;width:28px;height:3px;background:#f4f4f4;"></div>
<svg class="a" style="left:380px;top:920px" width="20" height="8" viewBox="0 0 20 8"><circle cx="10" cy="6" r="3" fill="#8a80e0"/></svg>
<svg class="a" style="left:540px;top:918px" width="16" height="10" viewBox="0 0 16 10"><path d="M8 2 L11 9 H5 Z" fill="#f0c020"/></svg>
<div class="a t " style="left:1543.5px;top:918.63px;font-size:12px;color:#fff;font-weight:normal;">14:14</div>
</body></html>
